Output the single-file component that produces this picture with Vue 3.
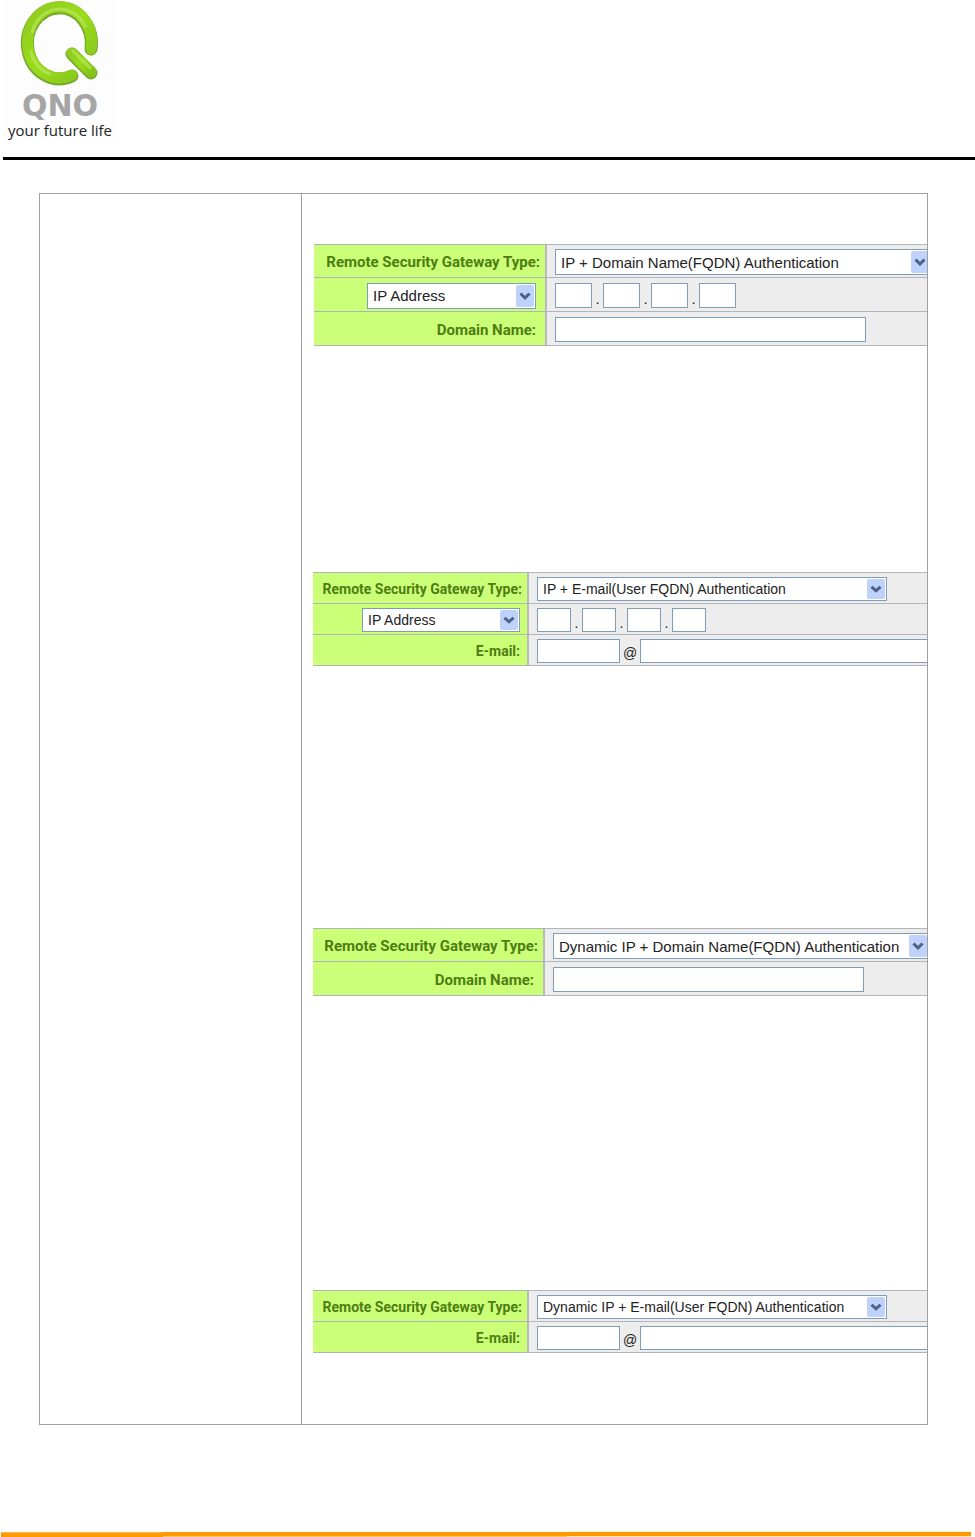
<template>
  <div class="page">
    <header class="page-header">
      <div class="logo">
        <svg class="logo-mark" viewBox="0 0 110 90" aria-hidden="true">
          <defs>
            <linearGradient id="ring" x1="0" y1="0" x2="1" y2="1">
              <stop offset="0" stop-color="#8fcb20" />
              <stop offset="0.5" stop-color="#9bdc1c" />
              <stop offset="1" stop-color="#83c31c" />
            </linearGradient>
          </defs>
          <g fill="none" stroke-linecap="round">
            <g stroke="#74a829" stroke-width="13">
              <path d="M86 49 A32 35.5 0 1 0 67 76" />
              <path d="M67 54 L86 73" />
            </g>
            <g stroke="url(#ring)" stroke-width="11">
              <path d="M86 49 A32 35.5 0 1 0 67 75" />
              <path d="M67 53 L86 72" />
            </g>
            <g stroke="#b9e85a" stroke-width="3" opacity="0.7">
              <path d="M27 32 A29 33 0 0 1 80 26" />
              <path d="M26 52 A29 33 0 0 0 45 74" />
              <path d="M68 51 L85 68" />
            </g>
          </g>
        </svg>
        <span class="logo-name">QNO</span>
        <span class="logo-tagline">your future life</span>
      </div>
    </header>

    <main class="sheet">
      <div class="sheet-side"></div>
      <div class="sheet-body">
        <form
          v-for="panel in panels"
          :key="panel.id"
          class="panel"
          :class="[`panel--${panel.size}`, `panel--${panel.id}`]"
          @submit.prevent
        >
          <div class="row row--type">
            <label class="row-label" :for="`${panel.id}-type`">Remote Security Gateway Type:</label>
            <div class="row-field">
              <span class="select-box select-box--type">
                <select :id="`${panel.id}-type`" v-model="panel.type">
                  <option v-for="type in types" :key="type">{{ type }}</option>
                </select>
                <svg class="arrow" viewBox="0 0 18 22" preserveAspectRatio="none" aria-hidden="true">
                  <rect width="18" height="22" rx="2" fill="#bed2fb" />
                  <path d="M4.5 8.5 L9 13 L13.5 8.5" fill="none" stroke="#4d6185" stroke-width="3" />
                </svg>
              </span>
            </div>
          </div>

          <div v-if="panel.ip" class="row">
            <div class="row-label">
              <span class="select-box select-box--ip">
                <select v-model="panel.ipMode" aria-label="IP Address">
                  <option>IP Address</option>
                  <option>IP by DNS Resolved</option>
                </select>
                <svg class="arrow" viewBox="0 0 18 22" preserveAspectRatio="none" aria-hidden="true">
                  <rect width="18" height="22" rx="2" fill="#bed2fb" />
                  <path d="M4.5 8.5 L9 13 L13.5 8.5" fill="none" stroke="#4d6185" stroke-width="3" />
                </svg>
              </span>
            </div>
            <div class="row-field">
              <template v-for="n in 4" :key="n">
                <span v-if="n > 1" class="dot">.</span>
                <input v-model="panel.ip[n - 1]" class="octet" type="text" maxlength="3" :aria-label="`IP ${n}`" />
              </template>
            </div>
          </div>

          <div v-if="panel.kind === 'domain'" class="row">
            <label class="row-label" :for="`${panel.id}-domain`">Domain Name:</label>
            <div class="row-field">
              <input :id="`${panel.id}-domain`" v-model="panel.domain" class="domain" type="text" />
            </div>
          </div>

          <div v-else class="row">
            <label class="row-label" :for="`${panel.id}-user`">E-mail:</label>
            <div class="row-field">
              <input :id="`${panel.id}-user`" v-model="panel.user" class="mail-user" type="text" />
              <span class="at">@</span>
              <input v-model="panel.host" class="mail-host" type="text" aria-label="E-mail host" />
            </div>
          </div>
        </form>
      </div>
    </main>

    <footer class="page-footer">
      <span class="bar bar--first"></span>
      <span class="bar bar--second"></span>
      <span class="bar bar--third"></span>
    </footer>
  </div>
</template>

<script setup>
import { reactive } from 'vue'

const types = [
  'IP + Domain Name(FQDN) Authentication',
  'IP + E-mail(User FQDN) Authentication',
  'Dynamic IP + Domain Name(FQDN) Authentication',
  'Dynamic IP + E-mail(User FQDN) Authentication',
]

const panels = reactive([
  { id: 'ip-domain', size: 'large', kind: 'domain', type: types[0], ipMode: 'IP Address', ip: ['', '', '', ''], domain: '' },
  { id: 'ip-email', size: 'small', kind: 'email', type: types[1], ipMode: 'IP Address', ip: ['', '', '', ''], user: '', host: '' },
  { id: 'dyn-domain', size: 'large', kind: 'domain', type: types[2], domain: '' },
  { id: 'dyn-email', size: 'small', kind: 'email', type: types[3], user: '', host: '' },
])
</script>

<style>
body {
  margin: 0;
  background: #ffffff;
}
</style>

<style scoped>
.page {
  display: flex;
  flex-direction: column;
  min-height: 100vh;
  font-family: 'Liberation Sans', Arial, sans-serif;
  color: #222222;
}

.page *,
.page *::before {
  box-sizing: border-box;
}

/* Header */
.page-header {
  margin-left: 3px;
  padding-bottom: 17px;
  border-bottom: 3px solid #000000;
}

.logo {
  display: flex;
  flex-direction: column;
  align-items: center;
  width: 114px;
  height: 140px;
  background: #fdfdfd;
}

.logo-mark {
  width: 110px;
  height: 90px;
  flex-shrink: 0;
}

.logo-name {
  font-family: 'DejaVu Sans', sans-serif;
  font-size: 30px;
  font-weight: 700;
  line-height: 32px;
  color: #a5a5a5;
}

.logo-tagline {
  font-family: 'Open Sans', sans-serif;
  font-size: 15px;
  line-height: 16px;
  white-space: nowrap;
  color: #222222;
}

/* Sheet */
.sheet {
  display: flex;
  margin: 33px 47px 0 39px;
  border: 1px solid #a0a0a0;
}

.sheet-side {
  flex: 0 0 262px;
  border-right: 1px solid #a0a0a0;
}

.sheet-body {
  flex: 1;
  min-width: 0;
  padding: 50px 0 71px 11px;
  overflow: hidden;
}

/* Panels */
.panel {
  --label: 231px;
  --control: 26px;
  --field: 25px;
  --text: 15px;
  --inset: 9px;
  border-top: 1px solid #b3b3bb;
}

.panel--small {
  --label: 214px;
  --control: 24px;
  --field: 24px;
  --text: 14px;
  --inset: 7px;
}

.panel--ip-domain { margin-left: 1px; margin-bottom: 226px; }
.panel--ip-email { margin-bottom: 262px; }
.panel--dyn-domain { --label: 230px; margin-bottom: 294px; }

.row {
  display: flex;
  height: 34px;
  border-bottom: 1px solid #b3b3bb;
}

.row--type { height: 33px; }
.panel--small .row { height: 31px; }

.row-label {
  display: flex;
  flex: 0 0 var(--label);
  align-items: center;
  justify-content: flex-end;
  min-width: 0;
  padding: 2px var(--inset) 0 0;
  background: #ccff78;
  font-family: Roboto, 'Liberation Sans', sans-serif;
  font-size: var(--text);
  font-weight: 700;
  white-space: nowrap;
  color: #4d7d12;
}

.row--type .row-label { padding-right: 5px; }

.row-field {
  display: flex;
  flex: 1;
  align-items: center;
  min-width: 0;
  padding: 2px 0 0 8px;
  overflow: hidden;
  border-left: 2px solid #b9b9c0;
  background: #ededed;
}

/* Controls */
input,
select {
  margin: 0;
  border: 1px solid #7f9db9;
  border-radius: 0;
  outline: none;
  background: #ffffff;
  font-family: 'Liberation Sans', Arial, sans-serif;
  font-size: var(--text);
  color: #222222;
}

input {
  flex-shrink: 0;
  height: var(--field);
  padding: 0 4px;
}

.select-box {
  position: relative;
  flex-shrink: 0;
  width: 376px;
  height: var(--control);
}

.select-box select {
  display: block;
  width: 100%;
  height: 100%;
  padding: 0 0 0 5px;
  appearance: none;
}

.select-box--ip { width: 169px; }
.panel--small .select-box--type { width: 350px; }
.panel--small .select-box--ip { width: 158px; }

.arrow {
  position: absolute;
  top: 2px;
  right: 2px;
  width: 18px;
  height: calc(100% - 4px);
  pointer-events: none;
}

.octet { width: 37px; }
.panel--small .octet { width: 34px; }

.dot {
  flex: 0 0 11px;
  padding-top: 6px;
  font-size: var(--text);
  text-align: center;
}

.domain { width: 311px; }

.mail-user { width: 83px; }

.at {
  flex: 0 0 20px;
  padding-top: 3px;
  font-size: var(--text);
  text-align: center;
}

.mail-host { width: 311px; }

/* Footer */
.page-footer {
  display: flex;
  margin: auto 4px 0 1px;
}

.bar {
  height: 6px;
  border-top: 1px solid #ffffff;
  background: #ff9900;
}

.bar--first {
  flex: 162;
  box-shadow: inset 0 1px #ffb84d;
}

.bar--second {
  flex: 404;
  border-bottom: 1px solid #ffc266;
}

.bar--third {
  flex: 404;
  border-top-color: #fff0d9;
  border-bottom: 1px solid #ffe2b5;
}
</style>
